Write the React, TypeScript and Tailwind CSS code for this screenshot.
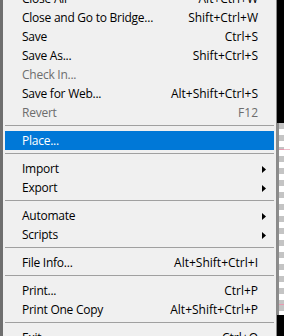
import React from "react";

type Item =
  | { kind: "item"; label: string; shortcut?: string; disabled?: boolean; sub?: boolean; active?: boolean }
  | { kind: "sep" };

const items: Item[] = [
  { kind: "item", label: "Close All", shortcut: "Alt+Ctrl+W" },
  { kind: "item", label: "Close and Go to Bridge...", shortcut: "Shift+Ctrl+W" },
  { kind: "item", label: "Save", shortcut: "Ctrl+S" },
  { kind: "item", label: "Save As...", shortcut: "Shift+Ctrl+S" },
  { kind: "item", label: "Check In...", disabled: true },
  { kind: "item", label: "Save for Web...", shortcut: "Alt+Shift+Ctrl+S" },
  { kind: "item", label: "Revert", shortcut: "F12", disabled: true },
  { kind: "sep" },
  { kind: "item", label: "Place...", active: true },
  { kind: "sep" },
  { kind: "item", label: "Import", sub: true },
  { kind: "item", label: "Export", sub: true },
  { kind: "sep" },
  { kind: "item", label: "Automate", sub: true },
  { kind: "item", label: "Scripts", sub: true },
  { kind: "sep" },
  { kind: "item", label: "File Info...", shortcut: "Alt+Shift+Ctrl+I" },
  { kind: "sep" },
  { kind: "item", label: "Print...", shortcut: "Ctrl+P" },
  { kind: "item", label: "Print One Copy", shortcut: "Alt+Shift+Ctrl+P" },
  { kind: "sep" },
  { kind: "item", label: "Exit", shortcut: "Ctrl+Q" },
];

function Arrow() {
  return (
    <svg width="4" height="7" viewBox="0 0 4 7" className="block">
      <path d="M0 0L4 3.5L0 7z" fill="#000" />
    </svg>
  );
}

export default function App() {
  return (
    <div
      className="w-[295px] h-[336px] overflow-hidden flex bg-white text-[12px]"
      style={{ fontFamily: '"Open Sans", "Noto Sans", sans-serif' }}
    >
      {/* left edge */}
      <div className="w-[3px] shrink-0 bg-[#6f6f6f]" />

      {/* menu */}
      <div className="w-[273px] shrink-0 bg-[#f0f0f0] px-[2px]">
        <div className="-mt-[11px] flex flex-col">
          {items.map((it, i) =>
            it.kind === "sep" ? (
              <div key={i} className="h-[9px] pt-[3px]">
                <div className="h-px bg-[#a0a0a0]" />
              </div>
            ) : (
              <div
                key={i}
                className={
                  "h-[19px] flex items-center pl-[17px] pt-px leading-none " +
                  (it.active ? "bg-[#0078d7] text-white" : it.disabled ? "text-[#6d6d6d]" : "text-black")
                }
              >
                <span className="flex-1 whitespace-nowrap tracking-[-0.25px]">{it.label}</span>
                {it.shortcut && <span className="pr-[16px] whitespace-nowrap">{it.shortcut}</span>}
                {it.sub && (
                  <span className="pr-[8px]">
                    <Arrow />
                  </span>
                )}
              </div>
            )
          )}
        </div>
      </div>

      {/* right border + background strip */}
      <div className="w-px shrink-0 bg-[#8a8a8a]" />
      <div className="w-[7px] shrink-0 flex flex-col">
        <div className="h-[123px] bg-black" />
        <div className="flex-1 flex">
          <div className="w-[2px] bg-[#8c8c8c]" />
          <div className="flex-1 flex flex-col">
            <div className="h-[26px] bg-[repeating-linear-gradient(to_bottom,#c4c4c4_0,#c4c4c4_6px,#ffffff_6px,#ffffff_12px)]" />
            <div className="h-px bg-[#e79ab0]" />
            <div className="h-[154px] bg-[repeating-linear-gradient(to_bottom,#ffffff_0,#ffffff_6px,#c4c4c4_6px,#c4c4c4_12px)]" />
            <div className="h-px bg-[#e79ab0]" />
            <div className="flex-1 bg-[repeating-linear-gradient(to_bottom,#c4c4c4_0,#c4c4c4_6px,#ffffff_6px,#ffffff_12px)]" />
          </div>
        </div>
        <div className="h-[21px] bg-black" />
      </div>
      <div className="flex-1 bg-white flex flex-col">
        <div className="h-[149px]" />
        <div className="h-px w-[6px] bg-[#f0c0cc]" />
      </div>
    </div>
  );
}
